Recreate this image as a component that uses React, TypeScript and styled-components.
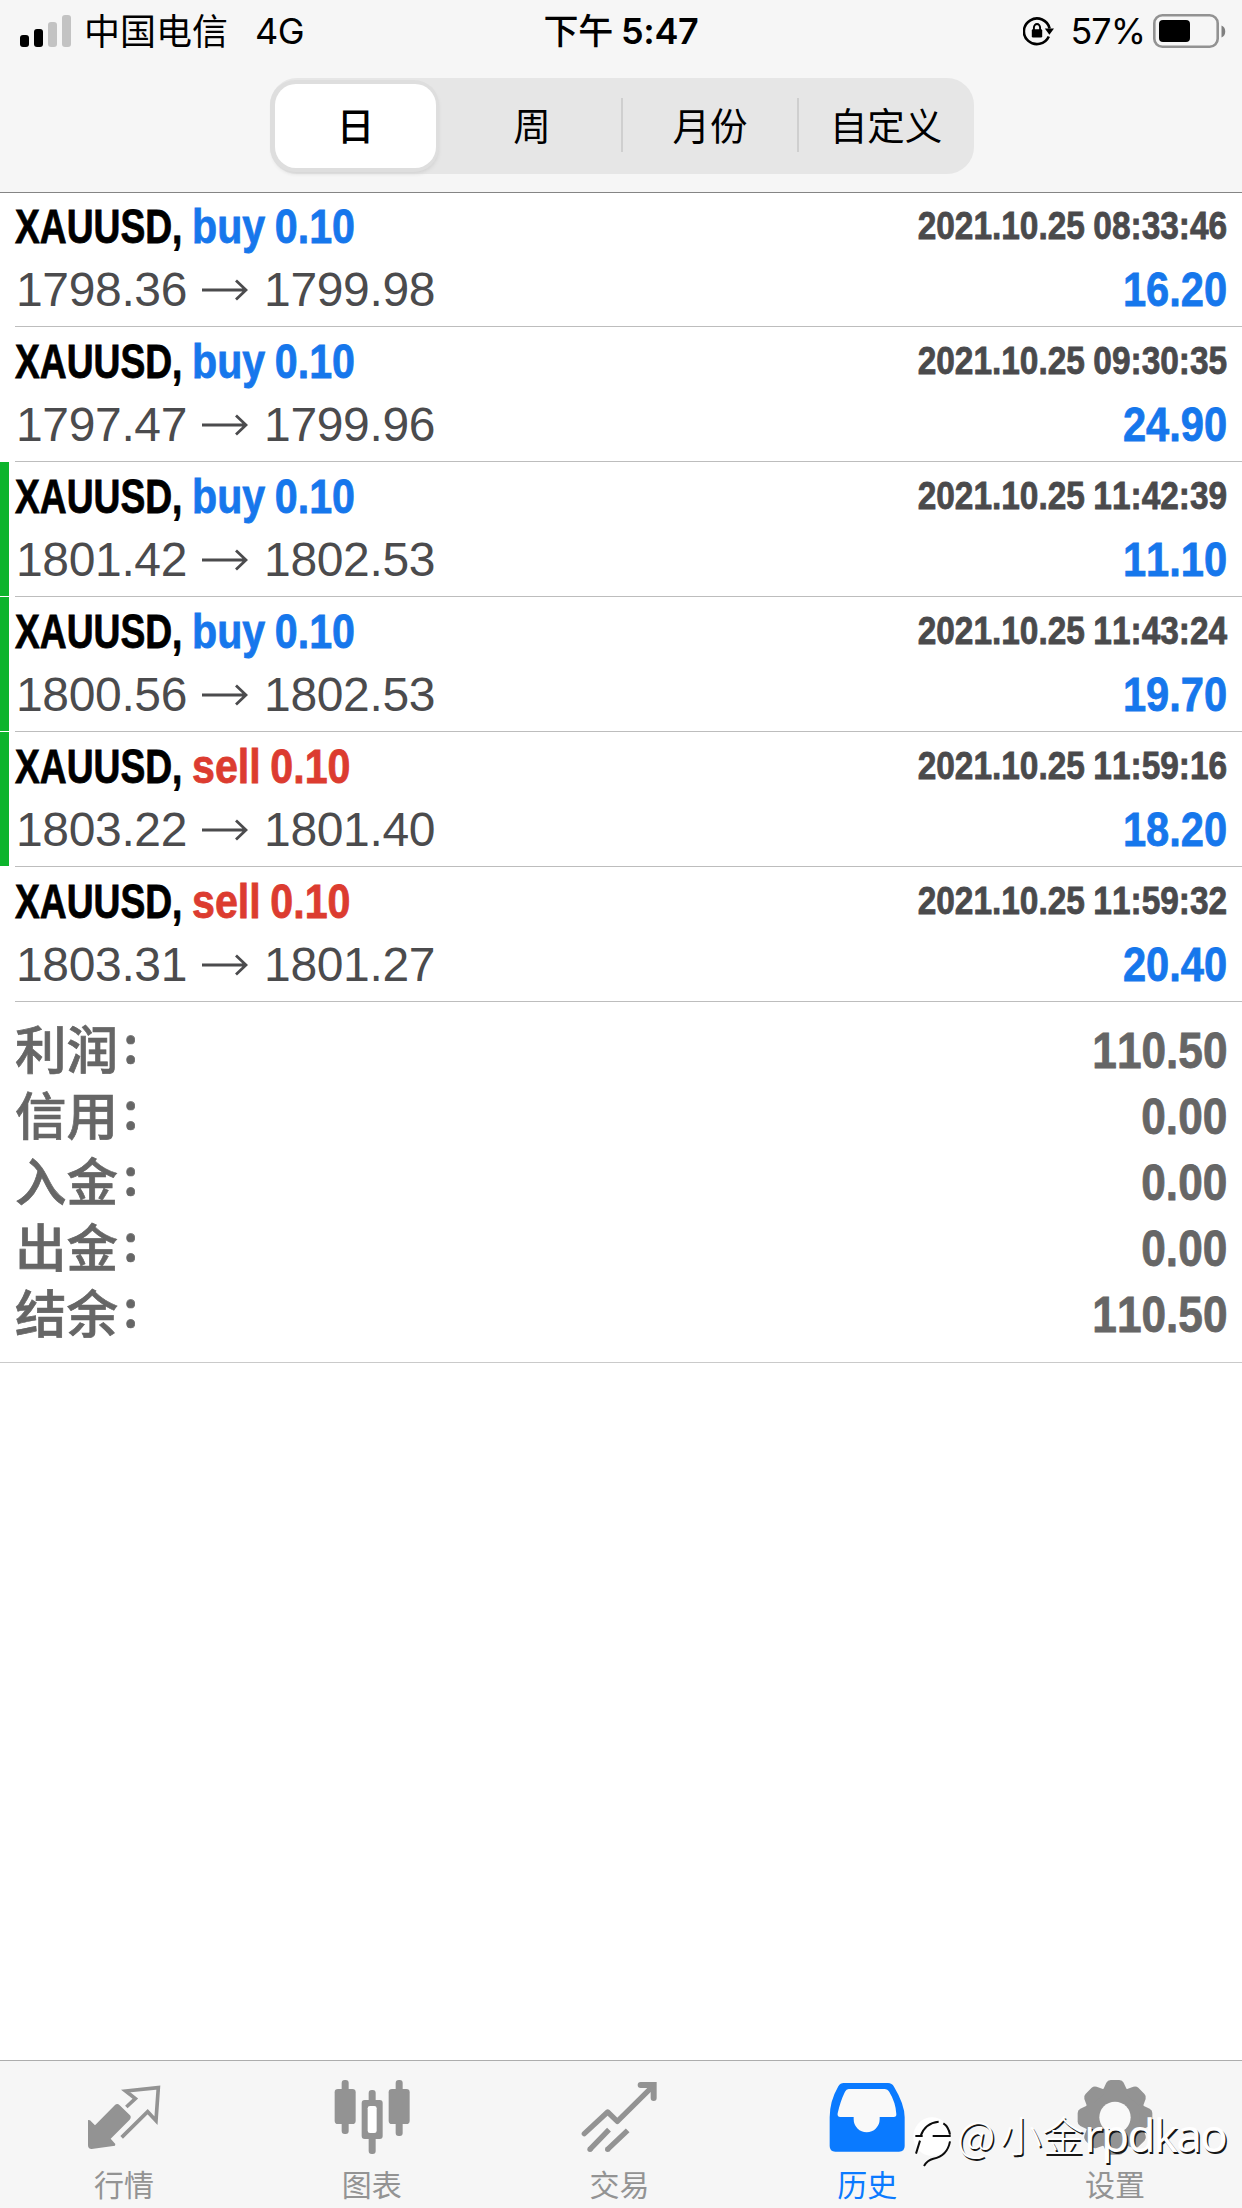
import React from "react";
import styled, { createGlobalStyle } from "styled-components";

const Global = createGlobalStyle`
  * { box-sizing: border-box; }
  body { margin: 0; background: #fff; }
`;

const cjk = `"Noto Sans CJK SC", sans-serif`;

const Screen = styled.div`
  position: relative;
  width: 1242px;
  height: 2208px;
  display: flex;
  flex-direction: column;
  background: #fff;
  color: #000;
  font-family: "Liberation Sans", ${cjk};
  font-kerning: none;
  overflow: hidden;
`;

const Header = styled.header`
  height: 193px;
  flex: none;
  background: #f6f6f6;
  border-bottom: 1px solid #858585;
`;

const StatusBar = styled.div`
  height: 62px;
  display: grid;
  grid-template-columns: 1fr auto 1fr;
  align-items: center;
  padding: 0 15px 0 20px;
  font: 400 36px/62px Inter, ${cjk};
`;

const StatusGroup = styled.div<{ $end?: boolean }>`
  display: flex;
  align-items: center;
  justify-content: ${(p) => (p.$end ? "flex-end" : "flex-start")};
`;

const Carrier = styled.span`
  margin-left: 12px;
  font: 400 36px/58px ${cjk};
  padding-bottom: 4px;
`;

const Network = styled.span`
  margin-left: 27px;
  letter-spacing: -0.6px;
`;

const Clock = styled.div`
  display: flex;
  gap: 8px;
  padding-right: 5px;
  font-weight: 600;
  letter-spacing: -0.3px;
`;

const ClockPeriod = styled.span`
  font: 500 35px/58px ${cjk};
`;

const Percent = styled.span`
  margin: 0 8px 0 15px;
  letter-spacing: -1px;
`;

const Segments = styled.div`
  width: 704px;
  height: 96px;
  margin: 16px 0 0 270px;
  padding: 6px 0 6px 5px;
  display: flex;
  border-radius: 27px;
  background: #e6e6e6;
`;

const Segment = styled.button<{ $active?: boolean; $divided?: boolean; $width: number; $inset?: number }>`
  position: relative;
  flex: none;
  width: ${(p) => p.$width}px;
  height: 84px;
  padding: 0 0 4px ${(p) => p.$inset ?? 0}px;
  border: 0;
  border-radius: 21px;
  background: ${(p) => (p.$active ? "#fff" : "transparent")};
  box-shadow: ${(p) => (p.$active ? "-1px 0 0 4px #dedede, 0 3px 4px 2px #cecece" : "none")};
  color: #000;
  font: ${(p) => (p.$active ? 500 : 400)} 37.5px/80px ${cjk};
  &::before {
    content: "";
    display: ${(p) => (p.$divided ? "block" : "none")};
    position: absolute;
    left: -1px;
    top: 14px;
    width: 2px;
    height: 54px;
    background: #cfcfcf;
  }
`;

const Deal = styled.article<{ $first?: boolean; $marked?: boolean }>`
  height: ${(p) => (p.$first ? 134 : 135)}px;
  display: flex;
  flex: none;
  &::before {
    content: "";
    width: 9px;
    margin: 0 6px 1px 0;
    background: ${(p) => (p.$marked ? "#0cb42c" : "transparent")};
  }
`;

const DealBody = styled.div`
  flex: 1;
  padding: 1px 15px 0 0;
  border-bottom: 1px solid #bdbdbd;
`;

const Line = styled.div<{ $height: number }>`
  height: ${(p) => p.$height}px;
  display: flex;
  align-items: center;
  justify-content: space-between;
`;

const DealTitle = styled.div`
  display: flex;
  font-weight: 700;
`;

/* Bold text narrowed to a condensed width */
const Condensed = styled.span<{ $size: number; $scale: number; $width?: number; $right?: boolean; $color: string; $spacing?: number }>`
  display: block;
  width: ${(p) => (p.$width ? `${p.$width}px` : "auto")};
  white-space: pre;
  font-weight: 700;
  font-size: ${(p) => p.$size}px;
  line-height: 60px;
  word-spacing: ${(p) => p.$spacing ?? 0}px;
  color: ${(p) => p.$color};
  -webkit-text-stroke: 0.8px ${(p) => p.$color};
  transform: scaleX(${(p) => p.$scale});
  transform-origin: ${(p) => (p.$right ? "right" : "left")} center;
`;

const Timestamp = styled.div`
  height: 62px;
`;

const Prices = styled.div`
  display: flex;
  align-items: center;
  padding-left: 1px;
  color: #4b4b4d;
  font-size: 48px;
  line-height: 60px;
  letter-spacing: -0.35px;
`;

const ArrowIcon = styled.svg`
  width: 46px;
  height: 22px;
  margin: 0 16px 0 15px;
`;

const Summary = styled.section`
  height: 361px;
  flex: none;
  padding: 16px 15px 0;
  border-bottom: 1px solid #cacaca;
`;

const SummaryLabel = styled.span`
  display: flex;
  height: 66px;
  padding-bottom: 8px;
  align-items: center;
  color: #666;
  font: 500 51.5px/58px ${cjk};
  -webkit-text-stroke: 0.7px #666;
`;

const SummaryColon = styled.span`
  margin: -13px 0 0 5px;
`;

const TabBar = styled.nav`
  height: 148px;
  margin-top: auto;
  display: flex;
  padding: 17px 3px 0 0;
  border-top: 1px solid #adadad;
  background: #f6f6f6;
`;

const Tab = styled.div<{ $active?: boolean }>`
  flex: 1;
  display: flex;
  flex-direction: column;
  align-items: center;
  color: ${(p) => (p.$active ? "#0a7aff" : "#939393")};
  font: 400 30px/40px ${cjk};
`;

const TabIcon = styled.svg`
  width: 76px;
  height: 78px;
  margin: 0 0 7px;
  fill: none;
  stroke: none;
`;

const Watermark = styled.div`
  position: absolute;
  left: 912px;
  top: 2110px;
  height: 60px;
  display: flex;
  color: #fff;
`;

const WatermarkLogo = styled.svg`
  width: 42px;
  height: 60px;
  fill: none;
`;

const Handle = styled.span`
  display: flex;
  align-items: baseline;
  margin: -6px 0 0 3px;
  white-space: nowrap;
  font: 400 46px/60px "Noto Sans", ${cjk};
  letter-spacing: -2px;
  text-shadow: 1.5px 1.5px 0 #161616;
`;

const HandleName = styled.span`
  font: 300 42px/60px ${cjk};
  letter-spacing: 0;
`;

const HandleSign = styled(HandleName)`
  width: 43px;
`;

const deals = [
  { side: "buy", open: "1798.36", close: "1799.98", time: "2021.10.25 08:33:46", profit: "16.20" },
  { side: "buy", open: "1797.47", close: "1799.96", time: "2021.10.25 09:30:35", profit: "24.90" },
  { side: "buy", open: "1801.42", close: "1802.53", time: "2021.10.25 11:42:39", profit: "11.10", marked: true },
  { side: "buy", open: "1800.56", close: "1802.53", time: "2021.10.25 11:43:24", profit: "19.70", marked: true },
  { side: "sell", open: "1803.22", close: "1801.40", time: "2021.10.25 11:59:16", profit: "18.20", marked: true },
  { side: "sell", open: "1803.31", close: "1801.27", time: "2021.10.25 11:59:32", profit: "20.40" },
];

const totals = [
  ["利润", "110.50"],
  ["信用", "0.00"],
  ["入金", "0.00"],
  ["出金", "0.00"],
  ["结余", "110.50"],
];

const Signal = () => (
  <svg width="52" height="34" viewBox="0 0 52 34">
    <rect x="0" y="21" width="9" height="12" rx="3" fill="#000" />
    <rect x="14" y="15" width="9" height="18" rx="3" fill="#000" />
    <rect x="28" y="8" width="9" height="25" rx="3" fill="#c3c3c3" />
    <rect x="42" y="1" width="9" height="32" rx="3" fill="#c3c3c3" />
  </svg>
);

const RotationLock = () => (
  <svg width="32" height="32" viewBox="1 0 32 32" fill="none" stroke="#000">
    <path d="M26.8 21.5A13 12.8 0 1 1 27.6 13.5" strokeWidth="2.6" />
    <path d="M22.8 13.6h9.2l-4.6 6.2z" fill="#000" stroke="none" />
    <rect x="9.8" y="14.3" width="10.4" height="8.2" rx="1.2" fill="#000" stroke="none" />
    <path d="M11.9 15v-2.4a3.1 3.6 0 0 1 6.2 0V15" strokeWidth="1.9" />
  </svg>
);

const Battery = () => (
  <svg width="74" height="34" viewBox="0 0 74 34">
    <rect x="1.3" y="1.3" width="63.4" height="31.4" rx="8" fill="none" stroke="#929292" strokeWidth="2.6" />
    <rect x="6" y="6" width="31" height="22" rx="4" fill="#000" />
    <path d="M68.5 11.5c5 1.5 5 10.5 0 12z" fill="#808080" />
  </svg>
);

const QuotesIcon = () => (
  <TabIcon viewBox="255 84 228 234">
    <path d="M261 210L267 211L282 226L342 165Q349 158 356 166L387 196Q392 202 386 209L329 266L343 282L342 287L272 297Q261 297 261 286Z" fill="currentColor" />
    <path d="M376 171L403 146L374 123L472 113L465 212L440 185L362 262" stroke="currentColor" strokeWidth="11" strokeLinejoin="miter" />
  </TabIcon>
);

const ChartIcon = () => (
  <TabIcon viewBox="1003 84 228 234">
    <g fill="currentColor">
      <rect x="1026" y="90" width="21" height="162" rx="9" />
      <rect x="1005" y="117" width="63" height="105" rx="10" />
      <rect x="1188" y="90" width="21" height="168" rx="9" />
      <rect x="1167" y="117" width="63" height="105" rx="10" />
      <rect x="1107" y="120" width="21" height="192" rx="9" />
      <rect x="1086" y="150" width="63" height="117" rx="9" />
    </g>
    <rect x="1104" y="168" width="27" height="81" rx="7" fill="#fff" />
  </TabIcon>
);

const TradeIcon = () => (
  <TabIcon viewBox="124 84 228 234">
    <g stroke="currentColor" strokeLinejoin="round">
      <path d="M134 251L204 186L233 214L339 109" strokeWidth="16" strokeLinecap="round" />
      <path d="M303 105H342V144" strokeWidth="18" strokeLinecap="round" strokeLinejoin="miter" />
      <path d="M208 239L150 299M264 241L203 299" strokeWidth="16" />
    </g>
    <circle cx="151" cy="298" r="8" fill="currentColor" />
    <circle cx="204" cy="298" r="8" fill="currentColor" />
  </TabIcon>
);

const HistoryIcon = () => (
  <TabIcon viewBox="868 84 228 234">
    <path fill="currentColor" d="M912 99H1045Q1057 99 1063 110Q1095 163 1095 202V288Q1095 305 1078 305H887Q870 305 870 288V202Q870 154 896 109Q902 99 912 99Z" />
    <path fill="#f9f9f9" d="M927 117H1034Q1044 117 1049 126Q1068 157 1070 192Q1071 201 1062 201H1020V208A39 39 0 0 1 942 208V201H902Q892 201 894 190Q902 153 916 125Q920 117 927 117Z" />
  </TabIcon>
);

const SettingsIcon = () => (
  <TabIcon viewBox="596 84 228 234">
    <g fill="currentColor">
      <circle cx="710" cy="202" r="92" />
      {[0, 45, 90, 135, 180, 225, 270, 315].map((a) => (
        <path key={a} transform={`rotate(${a} 710 202)`} d="M670 128L684 98Q688 90 697 90H723Q732 90 736 98L750 128Z" />
      ))}
    </g>
    <circle cx="710" cy="202" r="47" fill="#f9f9f9" />
  </TabIcon>
);

const tabs = [
  { name: "行情", icon: <QuotesIcon /> },
  { name: "图表", icon: <ChartIcon /> },
  { name: "交易", icon: <TradeIcon /> },
  { name: "历史", icon: <HistoryIcon />, active: true },
  { name: "设置", icon: <SettingsIcon /> },
];

export default function App() {
  return (
    <Screen>
      <Global />
      <Header>
        <StatusBar>
          <StatusGroup>
            <Signal />
            <Carrier>中国电信</Carrier>
            <Network>4G</Network>
          </StatusGroup>
          <Clock>
            <ClockPeriod>下午</ClockPeriod>
            <span>5:47</span>
          </Clock>
          <StatusGroup $end>
            <RotationLock />
            <Percent>57%</Percent>
            <Battery />
          </StatusGroup>
        </StatusBar>
        <Segments>
          <Segment $active $width={161}>日</Segment>
          <Segment $width={186} $inset={6}>周</Segment>
          <Segment $width={176} $divided>月份</Segment>
          <Segment $width={176} $divided>自定义</Segment>
        </Segments>
      </Header>

      <main>
        {deals.map((d, i) => (
          <Deal key={d.time} $first={i === 0} $marked={d.marked}>
            <DealBody>
              <Line $height={i === 0 ? 66 : 67}>
                <DealTitle>
                  <Condensed $size={48} $scale={0.775} $width={177} $color="#000">XAUUSD,</Condensed>
                  <Condensed $size={48} $scale={0.857} $spacing={-2} $color={d.side === "buy" ? "#1677ec" : "#dc3c30"}>
                    {`${d.side} 0.10`}
                  </Condensed>
                </DealTitle>
                <Timestamp>
                  <Condensed $size={39} $scale={0.857} $spacing={-1} $right $color="#4a4a4c">{d.time}</Condensed>
                </Timestamp>
              </Line>
              <Line $height={60}>
                <Prices>
                  <span>{d.open}</span>
                  <ArrowIcon viewBox="0 0 46 22" fill="none" stroke="#4b4b4d" strokeWidth="2.8">
                    <path d="M0 11H44M34 1.5L44 11L34 20.5" />
                  </ArrowIcon>
                  <span>{d.close}</span>
                </Prices>
                <Condensed $size={48} $scale={0.867} $right $color="#1677ec">{d.profit}</Condensed>
              </Line>
            </DealBody>
          </Deal>
        ))}
        <Summary>
          {totals.map(([label, value]) => (
            <Line key={label} $height={66}>
              <SummaryLabel>
                {label}
                <SummaryColon>:</SummaryColon>
              </SummaryLabel>
              <Condensed $size={50.5} $scale={0.875} $right $color="#666">{value}</Condensed>
            </Line>
          ))}
        </Summary>
      </main>

      <TabBar>
        {tabs.map((t) => (
          <Tab key={t.name} $active={t.active}>
            {t.icon}
            {t.name}
          </Tab>
        ))}
      </TabBar>

      <Watermark>
        <WatermarkLogo viewBox="36 30 126 180">
          <ellipse cx="96" cy="110" rx="56" ry="58" fill="#fff" />
          <path
            d="M46 108H68M98 108H152M48 161L60 122M62 108Q75 69 116 65M130 70Q146 80 150 104M150 124Q142 168 100 176Q82 180 72 198"
            stroke="#0c0c0c"
            strokeWidth="6"
          />
        </WatermarkLogo>
        <Handle>
          <HandleSign>@</HandleSign>
          <HandleName>小金</HandleName>
          <span>rpdkao</span>
        </Handle>
      </Watermark>
    </Screen>
  );
}
